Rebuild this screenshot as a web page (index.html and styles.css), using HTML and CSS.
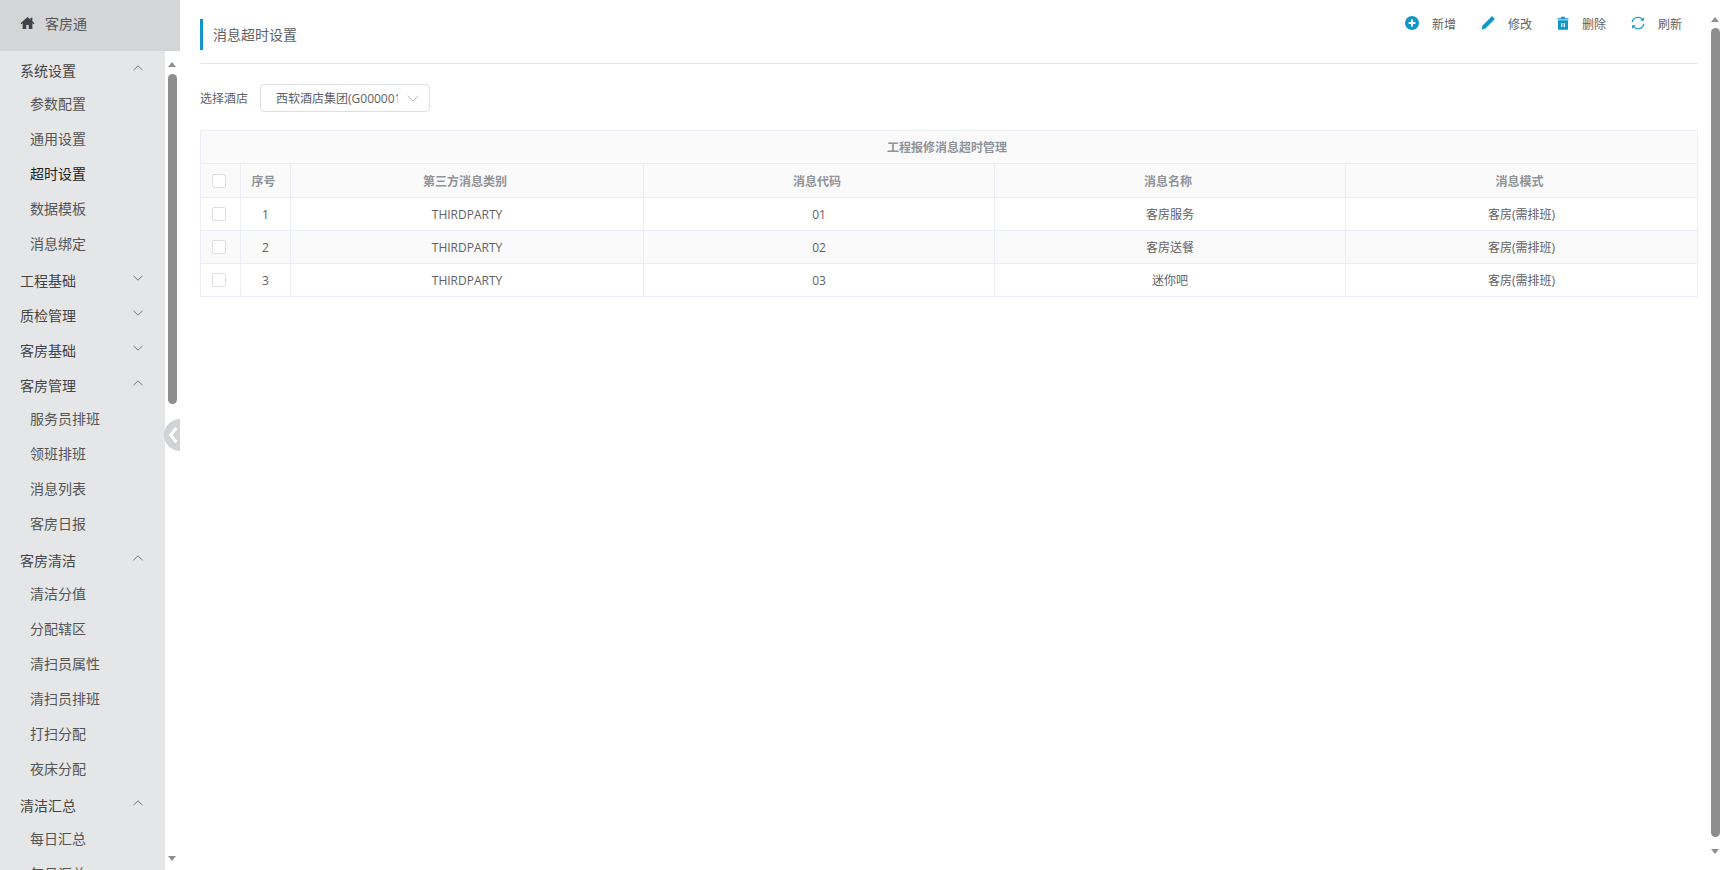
FILE: index.html
```html
<!DOCTYPE html>
<html lang="zh-CN">
<head>
    <meta charset="UTF-8">
    <meta name="viewport" content="width=device-width, initial-scale=1.0">
    <title>消息超时设置</title>
    <link rel="stylesheet" href="styles.css">
</head>
<body>

    <aside class="sidebar">
        <div class="brand">
            <svg class="brand-icon" viewBox="0 0 16 14"><path d="M8 0.5 0.5 7.2l1 1L2.8 7.1V13.5h3.9V9.2h2.6v4.3h3.9V7.1l1.3 1.1 1-1-2.3-2.1V1.3h-2v2L8 .5z" fill="#3f4347"/></svg>
            <span>客房通</span>
        </div>
        <div class="side-body">
            <nav class="menu">
                <div class="group">系统设置<svg class="chev" viewBox="0 0 10 6"><path d="M.5 5.2 5 .8l4.5 4.4"/></svg></div>
                <a class="item">参数配置</a>
                <a class="item">通用设置</a>
                <a class="item active">超时设置</a>
                <a class="item">数据模板</a>
                <a class="item">消息绑定</a>
                <div class="group">工程基础<svg class="chev" viewBox="0 0 10 6"><path d="M.5 .8 5 5.2 9.5 .8"/></svg></div>
                <div class="group">质检管理<svg class="chev" viewBox="0 0 10 6"><path d="M.5 .8 5 5.2 9.5 .8"/></svg></div>
                <div class="group">客房基础<svg class="chev" viewBox="0 0 10 6"><path d="M.5 .8 5 5.2 9.5 .8"/></svg></div>
                <div class="group">客房管理<svg class="chev" viewBox="0 0 10 6"><path d="M.5 5.2 5 .8l4.5 4.4"/></svg></div>
                <a class="item">服务员排班</a>
                <a class="item">领班排班</a>
                <a class="item">消息列表</a>
                <a class="item">客房日报</a>
                <div class="group">客房清洁<svg class="chev" viewBox="0 0 10 6"><path d="M.5 5.2 5 .8l4.5 4.4"/></svg></div>
                <a class="item">清洁分值</a>
                <a class="item">分配辖区</a>
                <a class="item">清扫员属性</a>
                <a class="item">清扫员排班</a>
                <a class="item">打扫分配</a>
                <a class="item">夜床分配</a>
                <div class="group">清洁汇总<svg class="chev" viewBox="0 0 10 6"><path d="M.5 5.2 5 .8l4.5 4.4"/></svg></div>
                <a class="item">每日汇总</a>
                <a class="item">每月汇总</a>
            </nav>
            <div class="scrollbar side-scroll">
                <i class="arrow-up"></i>
                <i class="thumb"></i>
                <i class="arrow-down"></i>
            </div>
        </div>
        <div class="collapse">
            <svg viewBox="0 0 10 18"><path d="M8.5 2 2.5 9l6 7" fill="none" stroke="#fff" stroke-width="3"/></svg>
        </div>
    </aside>

    <main class="content">
        <header class="page-head">
            <h1 class="page-title">消息超时设置</h1>
            <div class="toolbar">
                <a class="tool">
                    <svg viewBox="0 0 14 14"><circle cx="7" cy="7" r="7" fill="#1296c8"/><path d="M3.6 7h6.8M7 3.6v6.8" stroke="#fff" stroke-width="2"/></svg>
                    <span>新增</span>
                </a>
                <a class="tool">
                    <svg viewBox="0 0 14 14"><path d="M.6 13.4 1.5 9.6 9.6 1.5l2.9 2.9-8.1 8.1zM10.5.6l.7-.4 2.6 2.6-.4.7-.9.9-2.9-2.9z" fill="#1296c8"/></svg>
                    <span>修改</span>
                </a>
                <a class="tool">
                    <svg class="tool-trash" viewBox="1 0 12 14"><path d="M1.5 2.2h3.6V.8h3.8v1.4h3.6v1.2H1.5zM2 4.3h10v9.4H2z" fill="#1296c8"/><path d="M5.7 7v4M8.3 7v4" stroke="#fff" stroke-width="1.3"/></svg>
                    <span>删除</span>
                </a>
                <a class="tool">
                    <svg viewBox="0 0 14 14"><g fill="none" stroke="#1296c8" stroke-width="1.2"><path d="M1.2 6.2A5.8 5.8 0 0 1 11.4 3.4"/><path d="M12.8 7.8A5.8 5.8 0 0 1 2.6 10.6"/></g><path d="M12.9 1.2v3.6H9.3zM1.1 12.8V9.2h3.6z" fill="#1296c8"/></svg>
                    <span>刷新</span>
                </a>
            </div>
        </header>

        <div class="filter">
            <label class="filter-label">选择酒店</label>
            <div class="select">
                <span class="select-text">西软酒店集团(G000001)</span>
                <svg class="select-arrow" viewBox="0 0 12 7"><path d="M.7.8 6 6l5.3-5.2"/></svg>
            </div>
        </div>

        <table class="grid">
            <colgroup>
                <col class="col-check">
                <col class="col-no">
                <col class="col-third">
                <col class="col-mid">
                <col class="col-mid">
                <col>
            </colgroup>
            <thead>
                <tr class="title-row"><th colspan="6">工程报修消息超时管理</th></tr>
                <tr class="head-row">
                    <th class="cell-check"><span class="check"></span></th>
                    <th>序号</th>
                    <th>第三方消息类别</th>
                    <th>消息代码</th>
                    <th>消息名称</th>
                    <th>消息模式</th>
                </tr>
            </thead>
            <tbody>
                <tr>
                    <td class="cell-check"><span class="check"></span></td>
                    <td>1</td>
                    <td>THIRDPARTY</td>
                    <td>01</td>
                    <td>客房服务</td>
                    <td>客房(需排班)</td>
                </tr>
                <tr>
                    <td class="cell-check"><span class="check"></span></td>
                    <td>2</td>
                    <td>THIRDPARTY</td>
                    <td>02</td>
                    <td>客房送餐</td>
                    <td>客房(需排班)</td>
                </tr>
                <tr>
                    <td class="cell-check"><span class="check"></span></td>
                    <td>3</td>
                    <td>THIRDPARTY</td>
                    <td>03</td>
                    <td>迷你吧</td>
                    <td>客房(需排班)</td>
                </tr>
            </tbody>
        </table>

        <div class="scrollbar main-scroll">
            <i class="arrow-up"></i>
            <i class="thumb"></i>
            <i class="arrow-down"></i>
        </div>
    </main>

</body>
</html>
```

FILE: styles.css
```css
* {
    box-sizing: border-box;
    margin: 0;
    padding: 0;
}

html, body {
    height: 100%;
    overflow: hidden;
}

body {
    display: flex;
    background: #fff;
    color: #606266;
    font-family: "Open Sans", "Noto Sans CJK SC", sans-serif;
    font-size: 12px;
}

/* sidebar */
.sidebar {
    position: relative;
    flex: 0 0 180px;
    height: 870px;
    display: flex;
    flex-direction: column;
}

.brand {
    flex: 0 0 51px;
    display: flex;
    align-items: center;
    padding: 0 0 6px 20px;
    background: #d4d5d7;
    font-size: 14px;
    color: #555;
}

.brand-icon {
    width: 15px;
    height: 14px;
    margin-right: 10px;
}

.side-body {
    position: relative;
    flex: 1;
    display: flex;
    overflow: hidden;
}

.menu {
    width: 165px;
    background: #e4e6e7;
    padding-top: 2px;
}

.group {
    position: relative;
    height: 35px;
    line-height: 35px;
    padding-left: 20px;
    font-size: 14px;
    color: #444;
}

.chev {
    position: absolute;
    left: 133px;
    top: 12px;
    width: 10px;
    height: 6px;
    fill: none;
    stroke: #777;
    stroke-width: 1;
}

.item {
    display: block;
    height: 35px;
    line-height: 31px;
    padding-left: 30px;
    font-size: 14px;
    color: #555;
}

.item.active {
    color: #222;
}

.collapse {
    position: absolute;
    left: 164px;
    top: 419px;
    width: 16px;
    height: 32px;
    display: flex;
    align-items: center;
    padding-left: 4px;
    background: #d2d3d5;
    border-radius: 16px 0 0 16px;
}

.collapse svg {
    width: 10px;
    height: 18px;
}

/* fake scrollbars, same look in both panes */
.scrollbar {
    position: absolute;
    width: 9px;
}

.side-scroll {
    left: 168px;
    top: 0;
    height: 819px;
}

.main-scroll {
    left: 1531px;
    top: 0;
    height: 870px;
}

.thumb {
    position: absolute;
    left: 0;
    width: 9px;
    background: #8e8e8e;
    border-radius: 5px;
}

.side-scroll .thumb {
    top: 23px;
    height: 330px;
}

.main-scroll .thumb {
    top: 28px;
    height: 809px;
}

.arrow-up, .arrow-down {
    position: absolute;
    left: 0;
    width: 0;
    height: 0;
    border-left: 4.5px solid transparent;
    border-right: 4.5px solid transparent;
}

.arrow-up {
    border-bottom: 5px solid #8e8e8e;
}

.arrow-down {
    border-top: 5px solid #8e8e8e;
}

.side-scroll .arrow-up {
    top: 11px;
}

.side-scroll .arrow-down {
    top: 805px;
}

.main-scroll .arrow-up {
    top: 17px;
}

.main-scroll .arrow-down {
    top: 849px;
}

/* main area */
.content {
    position: relative;
    flex: 1;
    padding: 0 32px 0 20px;
}

.page-head {
    height: 64px;
    display: flex;
    justify-content: space-between;
    border-bottom: 1px solid #e4e6e7;
}

.page-title {
    height: 31px;
    margin-top: 19px;
    padding-left: 10px;
    border-left: 3px solid #1296c8;
    font-size: 14px;
    font-weight: 400;
    line-height: 31px;
    color: #606266;
}

.toolbar {
    display: flex;
    gap: 25px;
    padding: 17px 16px 0 0;
}

.tool {
    display: flex;
    align-items: flex-start;
    gap: 13px;
    height: 16px;
    color: #606266;
    line-height: 16px;
}

.tool svg {
    width: 14px;
    height: 14px;
    margin-top: -1px;
}

.tool .tool-trash {
    width: 12px;
}

.filter {
    display: flex;
    align-items: center;
    height: 28px;
    margin-top: 20px;
}

.filter-label {
    width: 60px;
}

.select {
    width: 170px;
    height: 28px;
    display: flex;
    align-items: center;
    padding-left: 15px;
    border: 1px solid #dcdfe6;
    border-radius: 4px;
}

.select-text {
    width: 122px;
    overflow: hidden;
    white-space: nowrap;
}

.select-arrow {
    width: 12px;
    height: 7px;
    margin-left: 9px;
    fill: none;
    stroke: #b8bbc2;
    stroke-width: 1;
}

.grid {
    width: 1498px;
    margin-top: 18px;
    border-collapse: collapse;
    table-layout: fixed;
}

.col-check {
    width: 40px;
}

.col-no {
    width: 50px;
}

.col-third {
    width: 353px;
}

.col-mid {
    width: 351px;
}

.grid th, .grid td {
    height: 33px;
    border: 1px solid #ebeef5;
    text-align: center;
    font-size: 12px;
    vertical-align: middle;
}

.grid .head-row th {
    height: 34px;
}

.grid th {
    padding-right: 4px;
    background: #fafafa;
    color: #909399;
    font-weight: 700;
}

.grid .cell-check {
    padding-right: 4px;
}

.grid tbody tr:nth-child(2) td {
    background: #fafafa;
}

.check {
    display: block;
    width: 14px;
    height: 14px;
    margin: 0 auto;
    background: #fff;
    border: 1px solid #dcdfe6;
    border-radius: 2px;
}
```
